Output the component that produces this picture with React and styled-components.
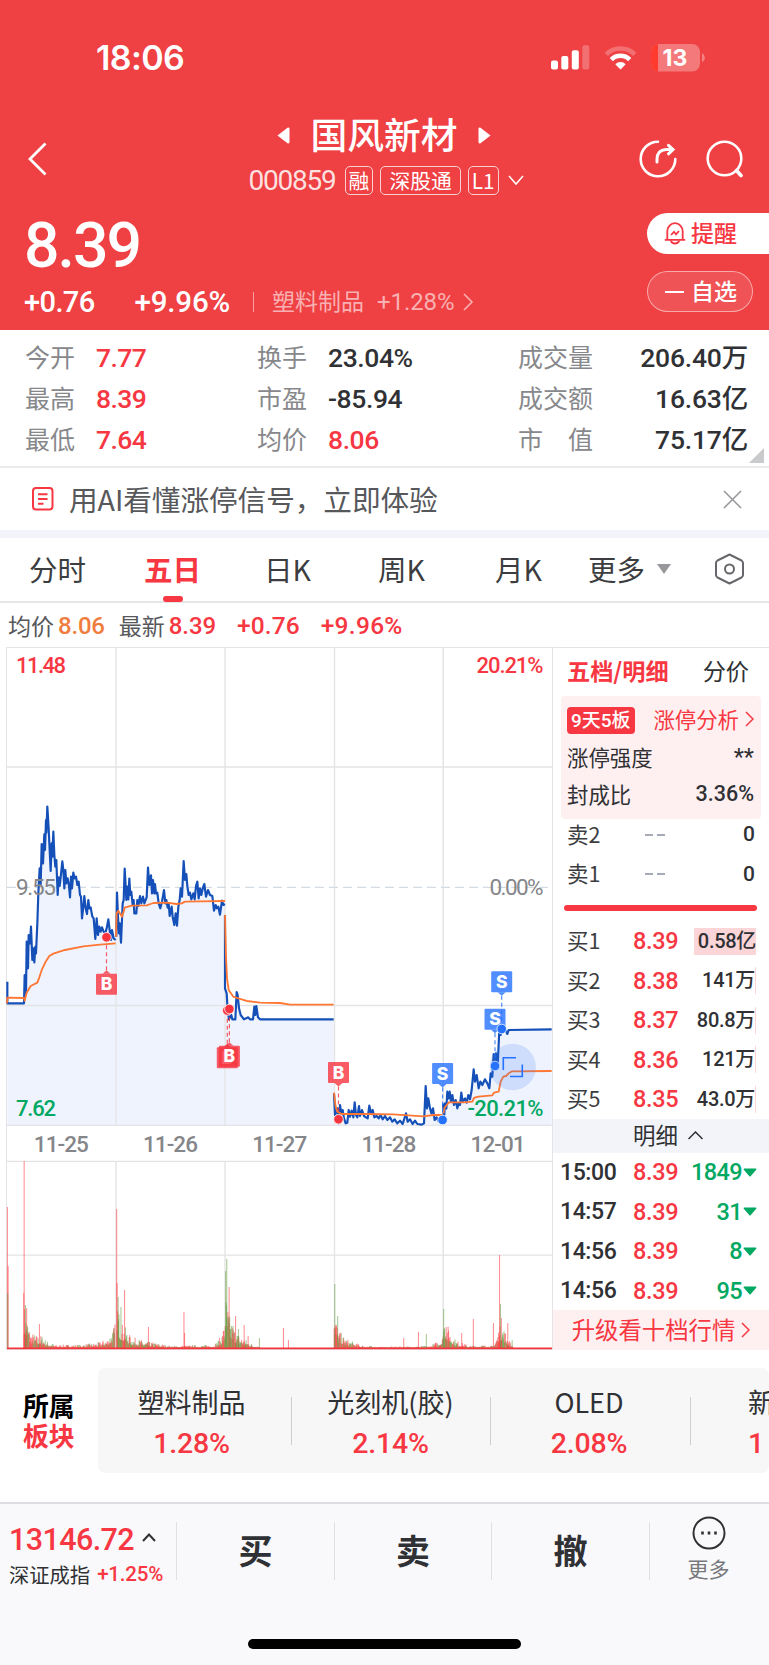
import React from 'react'
import styled, { createGlobalStyle } from 'styled-components'

const RED = '#f73742'
const GREEN = '#00a862'
const DARK = '#303134'
const numFont = 'Roboto, "Noto Sans CJK SC", sans-serif'

const GlobalStyle = createGlobalStyle`
* {
  box-sizing: border-box;
}
body {
  margin: 0;
  background-color: #fff;
  font-family: "Noto Sans CJK SC", sans-serif;
  color: ${DARK};
}
svg {
  display: block;
  flex-shrink: 0;
}
`

const Screen = styled.div`
width: 769px;
height: 1665px;
overflow: hidden;
display: flex;
flex-direction: column;
white-space: nowrap;
`

const Num = styled.span`
font-family: ${numFont};
font-size: ${props => props.$size}px;
font-weight: ${props => props.$weight || 500};
letter-spacing: ${props => props.$ls || 0}px;
color: ${props => props.$color || 'inherit'};
`

/* header */

const TopArea = styled.header`
height: 330px;
background-color: #ef4043;
color: #fff;
`
const StatusBar = styled.div`
height: 115px;
display: flex;
align-items: center;
justify-content: space-between;
padding: 0 63px 0 96px;
`
const Clock = styled.span`
font-family: Inter, sans-serif;
font-size: 34px;
font-weight: 600;
letter-spacing: -0.6px;
`
const StatusIcons = styled.div`
display: flex;
align-items: center;
gap: 14px;
`
const NavBar = styled.div`
height: 90px;
display: grid;
grid-template-columns: 1fr auto 1fr;
padding: 0 26px 0 27px;
align-items: center;
`
const NavIcons = styled.div`
display: flex;
justify-content: flex-end;
gap: 28px;
padding-bottom: 3px;
`
const StockTitle = styled.div`
display: flex;
flex-direction: column;
align-items: center;
`
const NameRow = styled.div`
height: 40px;
display: flex;
align-items: center;
gap: 20px;
padding-right: 2px;
font-size: 36.8px;
font-weight: 500;
line-height: 38px;
`
const Name = styled.span`
padding-bottom: 4px;
`
const CodeRow = styled.div`
height: 50px;
display: flex;
align-items: center;
gap: 7px;
padding: 1px 0 0 2px;
`
const Code = styled(Num)`
color: rgba(255, 255, 255, 0.85);
margin-right: 2px;
`
const Badge = styled.span`
height: 29px;
line-height: 26px;
padding: 0 ${props => props.$pad}px;
border: 1px solid rgba(255, 255, 255, 0.75);
border-radius: 5px;
font-size: 20.8px;
`
const PriceArea = styled.div`
display: flex;
justify-content: space-between;
padding-left: 24px;
`
const Price = styled.div`
height: 80px;
line-height: 81px;
font-family: ${numFont};
font-size: 62.5px;
font-weight: 500;
letter-spacing: -2px;
`
const ChangeRow = styled.div`
height: 34px;
display: flex;
align-items: center;
line-height: 34px;
`
const Percent = styled(Num)`
margin-left: 40px;
`
const Industry = styled.div`
display: flex;
align-items: center;
margin-left: 23px;
color: rgba(255, 255, 255, 0.6);
font-size: 23px;
gap: 13px;
line-height: 30px;
`
const IndustryName = styled.span`
padding-bottom: 4px;
`
const Divider = styled.span`
width: 1px;
height: 20px;
margin-right: 5px;
background-color: rgba(255, 255, 255, 0.5);
`
const Actions = styled.div`
display: flex;
flex-direction: column;
gap: 17px;
padding-top: 8px;
width: 122px;
`
const RemindButton = styled.div`
height: 41px;
line-height: 38px;
display: flex;
align-items: center;
gap: 5px;
padding-left: 17px;
border-radius: 21px 0 0 21px;
background-color: #fff;
color: ${RED};
font-size: 23px;
font-weight: 500;
`
const WatchButton = styled.div`
width: 106px;
height: 41px;
display: flex;
align-items: center;
gap: 7px;
padding-left: 17px;
border: 1px solid rgba(255, 255, 255, 0.5);
border-radius: 21px;
background-color: rgba(255, 255, 255, 0.1);
font-size: 23px;
font-weight: 500;
`
const ActionText = styled.span`
padding-bottom: 3px;
line-height: 34px;
`
const Minus = styled.span`
width: 19px;
height: 2px;
background-color: #fff;
`

/* quote table */

const Stats = styled.section`
height: 138px;
padding: 7px 5px 0 25px;
border-bottom: 2px solid #ebebee;
display: grid;
grid-template-columns: 71px 161px 71px 190px 88px 142px 1fr;
grid-template-rows: repeat(3, 41px);
align-items: center;
line-height: 41px;
`
const StatLabel = styled.span`
font-size: 25px;
color: #87888b;
height: 41px;
line-height: 38px;
`
const StatValue = styled(Num)`
text-align: ${props => props.$right ? 'right' : 'left'};
`
const Corner = styled.svg`
grid-column: 7;
grid-row: 3;
align-self: end;
justify-self: end;
margin-bottom: -3px;
`

const Banner = styled.section`
height: 62px;
display: flex;
align-items: center;
padding: 0 27px 0 32px;
font-size: 28.7px;
color: #57585b;
`
const BannerText = styled.span`
flex: 1;
margin-left: 15px;
padding-bottom: 2px;
letter-spacing: -0.1px;
`
const Band = styled.div`
height: 8px;
background-color: #f2f4f9;
`

/* period tabs */

const Tabs = styled.nav`
height: 65px;
border-bottom: 2px solid #e6e6e8;
display: grid;
grid-template-columns: 115px 120px 114px 117px 93px 118px 1fr;
font-size: 28.5px;
`
const Tab = styled.div`
padding-left: ${props => props.$pad || 0}px;
padding-top: 3px;
line-height: 56px;
display: flex;
align-items: center;
gap: 12px;
height: 59px;
font-weight: ${props => props.$active ? 700 : 400};
color: ${props => props.$active ? RED : '#3c3d40'};
&::after {
  content: '';
  display: ${props => props.$active ? 'block' : 'none'};
  width: 20px;
  height: 6px;
  border-radius: 3px;
  background-color: ${RED};
  position: relative;
  left: -50px;
  top: 30px;
}
`
const InfoRow = styled.div`
height: 44px;
display: flex;
align-items: center;
padding-left: 8px;
font-size: 23px;
color: #57585b;
line-height: 44px;
`
const InfoNum = styled(Num)`
margin-left: ${props => props.$gap}px;
padding-top: 2px;
`
const InfoLabel = styled.span`
margin-left: ${props => props.$gap || 0}px;
`

/* chart and order book */

const Main = styled.main`
display: flex;
height: 703px;
`
const Book = styled.aside`
width: 216px;
border-top: 1px solid #e3e3e6;
display: flex;
flex-direction: column;
`
const BookTabs = styled.div`
height: 48px;
padding: 0 20px 4px 14px;
display: flex;
justify-content: space-between;
align-items: center;
font-size: 23.2px;
`
const BookTab = styled.span`
font-weight: ${props => props.$active ? 700 : 400};
color: ${props => props.$active ? RED : DARK};
`
const LimitPanel = styled.div`
height: 123px;
flex-shrink: 0;
margin: 0 8px -4px;
padding: 6px 7px 0 6px;
border-radius: 4px;
background-color: #fef0f1;
`
const LimitRow = styled.div`
height: 37px;
line-height: 34px;
padding-bottom: ${props => props.$plain ? 2 : 0}px;
display: flex;
justify-content: space-between;
align-items: center;
font-size: 21.4px;
`
const StreakTag = styled.span`
height: 27px;
line-height: 27px;
padding: 0 4px;
border-radius: 4px;
background-color: ${RED};
color: #fff;
font-size: 19px;
font-weight: 500;
font-family: ${numFont};
`
const LimitLink = styled.span`
display: flex;
align-items: center;
gap: 6px;
padding-bottom: 3px;
color: ${RED};
`
const Level = styled.div`
height: 39.4px;
display: grid;
grid-template-columns: 66px 45px 1fr;
align-items: center;
padding: 0 13px 0 14px;
line-height: 36px;
`
const LevelName = styled.span`
font-size: 21.5px;
padding-bottom: 2px;
color: #3c3d40;
`
const NoPrice = styled.span`
justify-self: center;
display: flex;
gap: 4px;
margin-left: -2px;
&::before, &::after {
  content: '';
  width: 8px;
  height: 2px;
  background-color: #a5acb8;
}
`
const Volume = styled(Num)`
justify-self: end;
line-height: 27px;
padding: 0 ${props => props.$plain ? 1 : 0}px 0 4px;
background-color: ${props => props.$fill ? '#fcd5d8' : 'transparent'};
border-right: ${props => props.$edge ? '1px solid #fcd5d8' : 'none'};
`
const Pressure = styled.div`
height: 6px;
flex-shrink: 0;
margin: 11px 12px 11px 11px;
border-radius: 3px;
background-color: ${RED};
`
const DetailHead = styled.div`
height: 34px;
display: flex;
align-items: center;
justify-content: center;
gap: 10px;
padding: 0 5px 0 19px;
background-color: #f2f4f9;
font-size: 22.5px;
line-height: 28px;
`
const DetailTitle = styled.span`
padding-bottom: 3px;
`
const Tick = styled.div`
height: 39.4px;
display: grid;
grid-template-columns: 73px 44px 1fr 15px;
align-items: center;
padding: 0 12px 0 7px;
`
const TickVolume = styled(Num)`
justify-self: end;
`
const TickArrow = styled.svg`
justify-self: end;
`
const Upgrade = styled.div`
flex: 1;
display: flex;
align-items: center;
justify-content: center;
gap: 6px;
background-color: #fef0f1;
color: ${RED};
font-size: 23.4px;
line-height: 34px;
`
const UpgradeText = styled.span`
padding-bottom: 3px;
`

/* sectors */

const Sectors = styled.section`
height: 152px;
display: flex;
padding-top: 18px;
`
const SectorTitle = styled.div`
width: 98px;
padding: 22px 0 0 23px;
height: 105px;
font-size: 25.8px;
font-weight: 700;
line-height: 30px;
color: #000;
`
const SectorTitleRed = styled.div`
color: ${RED};
`
const SectorList = styled.div`
height: 105px;
flex: 1;
display: flex;
align-items: center;
overflow: hidden;
background-color: #f7f7f8;
border-radius: 7px;
`
const Sector = styled.div`
flex: 0 0 ${props => props.$width}px;
height: 48px;
display: flex;
flex-direction: column;
align-items: ${props => props.$cut ? 'flex-start' : 'center'};
justify-content: center;
padding-left: ${props => props.$cut ? 57 : 0}px;
padding-right: ${props => props.$shift || 0}px;
padding-top: 5px;
border-right: 1px solid #cfcfd3;
font-size: 27px;
line-height: 40px;
`
const SectorChange = styled(Num)`
line-height: 43px;
`

/* bottom bar */

const BottomBar = styled.footer`
flex: 1;
border-top: 2px solid #dcdde1;
background-color: #f9f9fc;
display: flex;
flex-direction: column;
align-items: center;
justify-content: space-between;
padding: 18px 0 16px;
`
const Trade = styled.div`
width: 769px;
display: grid;
grid-template-columns: 176px 158px 157px 158px 1fr;
grid-template-rows: 58px;
height: 58px;
`
const TradeButton = styled.div`
display: flex;
align-items: center;
justify-content: center;
padding: 0 0 2px;
border-left: 1px solid #dfe0e4;
font-size: 34px;
line-height: 50px;
font-weight: 600;
`
const IndexBox = styled.div`
padding: 9px 0 0 9px;
display: flex;
flex-direction: column;
justify-content: center;
`
const IndexRow = styled.div`
display: flex;
align-items: center;
gap: ${props => props.$gap}px;
font-size: 20.3px;
line-height: ${props => props.$lh}px;
`
const MoreBox = styled.div`
border-left: 1px solid #dfe0e4;
padding: 0 2px 2px 0;
display: flex;
flex-direction: column;
align-items: center;
justify-content: center;
gap: 2px;
font-size: 21px;
line-height: 32px;
color: #77787b;
`
const HomeIndicator = styled.div`
width: 273px;
height: 10px;
border-radius: 5px;
background-color: #000;
`

const stats = [
    ['今开', '7.77', true, '换手', '23.04%', false, '成交量', '206.40万'],
    ['最高', '8.39', true, '市盈', '-85.94', false, '成交额', '16.63亿'],
    ['最低', '7.64', true, '均价', '8.06', true, '市　值', '75.17亿']
]

const bids = [
    ['买1', '8.39', '0.58亿'],
    ['买2', '8.38', '141万'],
    ['买3', '8.37', '80.8万'],
    ['买4', '8.36', '121万'],
    ['买5', '8.35', '43.0万']
]

const ticks = [
    ['15:00', '1849'],
    ['14:57', '31'],
    ['14:56', '8'],
    ['14:56', '95']
]

// Each session holds its points at three times the chart size, from its own origin
const sessions = [
    {
        origin: '0 640',
        area: [22, 347, 1455],
        price: '22,1025 22,1090 72,1090 74,1005 78,1060 80,905 84,985 86,885 90,910 93,860 97,960 100,925 103,967 106,920 108,940 112,850 115,760 119,685 122,735 125,612 129,670 133,583 135,630 138,540 139,578 142,500 146,565 149,630 152,693 155,610 157,650 160,575 163,645 166,680 169,660 173,765 176,712 179,738 182,712 187,664 190,690 193,745 196,690 199,730 203,715 207,738 210,772 213,710 216,745 220,698 224,715 228,710 232,735 236,725 240,765 243,770 246,835 250,800 253,768 257,805 261,822 265,780 268,805 272,802 277,830 281,835 286,897 290,835 294,885 298,860 302,875 306,862 311,875 316,880 320,865 325,838 329,870 333,900 336,870 341,895 347,900',
        avg: '21,1090 22,1073 72,1074 74,1082 80,1058 92,1038 112,1028 118,1012 126,988 137,965 148,948 160,941 195,930 250,919 300,914 347,910'
    },
    {
        origin: '0 640',
        area: [349, 675, 1455],
        price: '349,890 351,758 354,830 357,880 359,850 363,908 368,790 371,780 374,686 377,738 379,780 382,740 385,778 388,716 391,765 394,755 398,795 401,780 403,820 409,820 412,780 415,798 420,768 424,790 429,770 433,790 440,772 444,683 448,735 453,706 456,760 459,720 463,760 465,732 468,760 472,758 476,790 481,805 486,785 492,750 496,790 499,780 503,803 506,790 509,828 515,800 518,830 523,855 527,820 531,857 535,800 539,780 542,745 546,770 551,663 555,720 559,702 562,738 566,765 570,758 574,778 580,760 584,778 588,738 592,725 596,775 600,745 604,765 609,742 613,732 618,770 624,750 630,765 637,768 642,812 647,795 651,805 655,800 660,824 666,782 670,795 675,793',
        avg: '348,890 350,820 355,812 366,830 371,815 374,803 395,797 440,796 460,789 500,788 530,792 545,790 555,785 600,784 675,783'
    },
    {
        origin: '0 640',
        area: [675, 1001, 1455],
        price: '675,825 675,1045 680,1060 683,1110 687,1138 694,1125 697,1138 706,1138 710,1056 713,1065 717,1105 722,1125 732,1138 745,1132 750,1138 759,1138 763,1100 766,1125 769,1098 774,1132 780,1138 1001,1138',
        avg: '675,825 678,950 681,1015 686,1050 700,1070 715,1075 740,1083 780,1088 840,1089 870,1094 1001,1094'
    },
    {
        origin: '220 780',
        area: [342, 668, 1035],
        price: '342,940 345,1005 352,985 356,1030 360,975 364,1000 368,990 372,1015 377,1030 382,1028 386,990 390,1010 395,992 400,1012 404,967 408,1005 412,1012 417,978 420,1008 426,990 432,1008 438,1012 443,1015 448,977 453,1000 458,990 463,1012 470,1008 476,1015 482,1005 488,1018 495,1008 502,1020 510,1012 517,1025 524,1018 532,1030 540,1022 548,1032 558,1000 563,1025 570,1018 578,1032 585,1022 592,1032 605,1034 612,1030 617,918 621,985 625,955 630,985 634,1000 639,985 644,1020 650,1012 656,1025 662,1008 668,1020',
        avg: '342,938 347,980 352,995 365,1002 430,1002 520,1003 610,1009 640,1005 668,1005'
    },
    {
        origin: '220 780',
        area: [669, 995, 1035],
        price: '669,970 672,1015 675,970 679,985 682,935 686,955 689,935 693,965 697,945 702,975 707,960 712,985 716,970 720,975 724,938 728,965 735,955 740,968 745,945 750,958 755,930 761,868 765,905 770,885 776,925 781,905 787,915 795,898 802,910 808,925 812,880 817,890 821,822 825,855 828,820 833,858 838,750 842,765 846,750 858,752 862,762 866,750 995,748',
        avg: '670,1000 673,985 680,975 687,967 730,967 757,965 762,954 775,950 817,946 822,938 836,935 842,905 850,890 858,888 866,880 876,874 995,873'
    }
]

const days = ['11-25', '11-26', '11-27', '11-28', '12-01']
const dayLines = [116, 225, 334.5, 443.2]

// [x, height] envelope of the small volume bars, per session
const volumeShape = [
    [[24, 42], [27, 30], [30, 16], [38, 12], [42, 13], [46, 8], [55, 4], [80, 4], [98, 6], [108, 10], [115, 24]],
    [[117, 52], [120, 26], [124, 22], [130, 12], [146, 7], [155, 6], [170, 3], [214, 4], [221, 12], [225, 26]],
    [[225, 55], [230, 28], [236, 16], [245, 9], [252, 5], [260, 2]],
    [[334, 42], [338, 18], [345, 10], [360, 4], [380, 2], [430, 3], [440, 9], [443, 12]],
    [[443, 36], [449, 18], [456, 8], [470, 3], [480, 4], [493, 3], [499, 20], [502, 24], [508, 10], [513, 2]]
]

// [x, height, rising]
const spikes = [
    [7.3, 142, 1], [8, 83, 1], [7.6, 56, 0], [24, 188, 1], [23.6, 56, 1], [25.3, 44, 0], [26.5, 41, 1],
    [39.3, 25, 1], [116.5, 140, 1], [117, 66, 1], [118, 52, 0], [120.8, 42, 0], [124.4, 59, 1],
    [148.3, 22, 1], [183.8, 37, 1], [184.4, 16, 1], [225.5, 78, 0], [226.6, 90, 0], [229, 62, 1],
    [235.4, 33, 1], [232.9, 23, 0], [238.3, 20, 0], [244, 24, 1], [248, 13, 1], [259.3, 11, 0],
    [283.3, 21, 1], [288.3, 9, 1], [334.6, 65, 0], [337.5, 33, 0], [418.3, 17, 1], [426.2, 15, 0],
    [403.6, 11, 1], [443.5, 40, 0], [446, 22, 1], [461.5, 16, 1], [473.2, 30, 1], [493.3, 26, 1],
    [499.4, 94, 1], [500.3, 45, 0], [501.2, 31, 1], [507.6, 26, 1], [512, 9, 0]
]

function smallBars() {
    const bars = []
    let seed = 7
    volumeShape.forEach(shape => {
        for (let i = 0; i < shape.length - 1; i++) {
            const [x0, h0] = shape[i]
            const [x1, h1] = shape[i + 1]
            for (let x = x0; x < x1; x += 0.45) {
                seed = (seed * 16807) % 2147483647
                const random = seed / 2147483647
                const top = h0 + (h1 - h0) * (x - x0) / (x1 - x0)
                bars.push([x, Math.max(1.5, top * (0.35 + 0.75 * random * random)), seed % 9 < 5 ? 1 : 0])
            }
        }
    })
    return bars
}

const marks = [
    { type: 'B', x: 227.3, y: 1047.3, dot: 1010.5 },
    { type: 'B', x: 106.5, y: 973.7, dot: 937.3 },
    { type: 'B', x: 229.4, y: 1045.7, dot: 1009 },
    { type: 'B', x: 338.5, y: 1062, dot: 1119.3 },
    { type: 'S', x: 442.6, y: 1063, dot: 1120 },
    { type: 'S', x: 495, y: 1008.7, dot: 1066 },
    { type: 'S', x: 501.7, y: 971.3, dot: 1029 }
]

function Mark({ type, x, y, dot }) {
    const up = dot < y
    const main = type === 'B' ? '#f7333f' : '#2472ff'
    const edge = up ? y : y + 21
    const tip = up ? y - 3.5 : y + 24.5
    return (
        <g>
            <line x1={x} x2={x} y1={tip} y2={dot} stroke={main} strokeOpacity=".8" strokeWidth="1.2" strokeDasharray="4 3" />
            <g fill={main} fillOpacity=".8">
                <rect x={x - 10.5} y={y} width="21" height="21" rx="1" />
                <path d={`M${x - 4} ${edge} L${x} ${tip} L${x + 4} ${edge}Z`} />
            </g>
            <text x={x} y={y + 16.6} textAnchor="middle" fill="#fff" fontSize="17.5" fontWeight="800" fontFamily="Inter">{type}</text>
            <circle cx={x} cy={dot} r="4.8" fill={main} stroke="#fff" strokeWidth=".8" />
        </g>
    )
}

function Chart() {
    return (
        <svg width="553" height="703" viewBox="0 647 553 703" fontFamily="Roboto" fontWeight="500">
            {sessions.map(({ origin, area, price }, i) => (
                <polygon
                    key={i}
                    transform={`translate(${origin}) scale(0.33333)`}
                    points={`${area[0]},${area[2]} ${price} ${area[1]},${area[2]}`}
                    fill="#eef3fe"
                />
            ))}
            <g stroke="#e4e4e6" fill="none">
                <rect x="6.5" y="647.5" width="546" height="702" />
                {dayLines.map(x => <path key={x} d={`M${x} 648V1125M${x} 1161V1349`} strokeWidth="1.4" />)}
                <path d="M7 767H552M7 1005.5H552M7 1125.3H552M7 1161.3H552M7 1255.2H552" strokeWidth="1.3" />
                <path d="M7 887.3H552" stroke="#d3dbe4" strokeWidth="1.3" strokeDasharray="9 5" />
            </g>
            <g fontSize="22.5" fontWeight="400" fill="#858689">
                <text x="543.5" y="894.5" textAnchor="end" textLength="54">0.00%</text>
            </g>
            {sessions.map(({ origin, price, avg }, i) => (
                <g key={i} transform={`translate(${origin}) scale(0.33333)`} fill="none" strokeLinejoin="round">
                    <polyline points={price} stroke="#1450b8" strokeWidth="6.5" />
                    <polyline points={avg} stroke="#ff7733" strokeWidth="5.5" />
                </g>
            ))}
            <text x="16" y="894.5" fontSize="22.5" fontWeight="400" fill="#858689" textLength="40">9.55</text>
            <g fontSize="22">
                <text x="16" y="672.5" fill={RED} textLength="50">11.48</text>
                <text x="543.5" y="672.5" fill={RED} textAnchor="end" textLength="67">20.21%</text>
                <text x="16" y="1116" fill={GREEN} textLength="40">7.62</text>
                <text x="543.5" y="1116" fill={GREEN} textAnchor="end" textLength="76">-20.21%</text>
            </g>
            {marks.map((mark, i) => <Mark key={i} {...mark} />)}
            <circle cx="512.7" cy="1067" r="23.2" fill="#3f7cf0" fillOpacity=".18" />
            <path d="M516 1057.8H503.3V1070M522.3 1064.5V1076.5H510" fill="none" stroke="#2472ff" strokeWidth="1.6" />
            {days.map((day, i) => (
                <text key={day} x={61.3 + i * 109.2} y="1152" textAnchor="middle" fontSize="22.5" fill="#858689" textLength="55">{day}</text>
            ))}
            {smallBars().concat(spikes).map(([x, h, rising], i) => (
                <rect key={i} x={x - 0.4} y={1349 - h} width="1.1" height={h} fill={rising ? '#ff2f38' : '#5f9a3a'} fillOpacity=".52" />
            ))}
            <path d="M7 1348.3H552" stroke="#f5333d" strokeWidth="1.7" />
        </svg>
    )
}

function Header() {
    return (
        <TopArea>
            <StatusBar>
                <Clock>18:06</Clock>
                <StatusIcons>
                    <svg width="39" height="25" viewBox="0 0 39 25" fill="#fff">
                        <rect x="0" y="15.5" width="7" height="9" rx="2" />
                        <rect x="10.3" y="11" width="7" height="13.5" rx="2" />
                        <rect x="20.8" y="5.3" width="7" height="19.2" rx="2" />
                        <rect x="31.3" y=".3" width="7" height="24.2" rx="2" fillOpacity=".25" />
                    </svg>
                    <svg width="33" height="25" viewBox="0 0 33 25" fill="none">
                        <path d="M2.2 9.3A20.5 20.5 0 0 1 30.8 9.3" stroke="#fff" strokeOpacity=".25" strokeWidth="4.6" />
                        <path d="M7.3 14.6A13 13 0 0 1 25.7 14.6" stroke="#fff" strokeWidth="4.6" />
                        <path d="M11.3 19.2A7.5 7.5 0 0 1 21.7 19.2L16.5 24.6Z" fill="#fff" />
                    </svg>
                    <svg width="55" height="28" viewBox="0 0 55 28">
                        <clipPath id="battery"><rect width="49" height="27.5" rx="8" /></clipPath>
                        <g clipPath="url(#battery)">
                            <rect width="49" height="28" fill="#fff" fillOpacity=".3" />
                            <rect width="7" height="28" fill="#ff3b30" />
                        </g>
                        <path d="M51 9Q54 11 54 13.7T51 18.5Z" fill="#fff" fillOpacity=".35" />
                        <text x="24" y="21.5" textAnchor="middle" fontSize="23" fontWeight="700" fontFamily="Inter" fill="#fff">13</text>
                    </svg>
                </StatusIcons>
            </StatusBar>
            <NavBar>
                <svg width="22" height="36" viewBox="0 0 22 36" fill="none" stroke="#fff" strokeWidth="2.8">
                    <path d="M18.5 1.5L3 17L18.5 32.5" />
                </svg>
                <StockTitle>
                    <NameRow>
                        <svg width="13" height="17" viewBox="0 0 13 17" fill="#fff"><path d="M0.5 8.5L10.5 .7Q12.5 0 12.5 2V15Q12.5 17 10.5 16.3Z" /></svg>
                        <Name>国风新材</Name>
                        <svg width="13" height="17" viewBox="0 0 13 17" fill="#fff"><path d="M12.5 8.5L2.5 .7Q.5 0 .5 2V15Q.5 17 2.5 16.3Z" /></svg>
                    </NameRow>
                    <CodeRow>
                        <Code $size={28} $ls={-1.2} $weight={400}>000859</Code>
                        <Badge $pad={3}>融</Badge>
                        <Badge $pad={8}>深股通</Badge>
                        <Badge $pad={3}>L1</Badge>
                        <svg width="18" height="12" viewBox="-4 0 18 12" fill="none" stroke="#fff" strokeWidth="1.5"><path d="M-1 1L6 9L13 1" /></svg>
                    </CodeRow>
                </StockTitle>
                <NavIcons>
                    <svg width="38" height="38" viewBox="0 0 38 38" fill="none" stroke="#fff" strokeWidth="2.6" strokeLinecap="round">
                        <path d="M19 1.7A17.3 17.3 0 1 0 36.3 19" />
                        <path d="M18 22V19.5Q18 10 27 9.5H33.5M29.5 5.3L34 9.5L29.5 13.8" strokeWidth="3" />
                    </svg>
                    <svg width="38" height="38" viewBox="0 0 38 38" fill="none" stroke="#fff" strokeWidth="2.6">
                        <circle cx="19.5" cy="18.5" r="16.8" />
                        <path d="M31.5 30.5L36 35.5" strokeWidth="3.6" strokeLinecap="round" />
                    </svg>
                </NavIcons>
            </NavBar>
            <PriceArea>
                <div>
                    <Price>8.39</Price>
                    <ChangeRow>
                        <Num $size={29} $ls={-0.6}>+0.76</Num>
                        <Percent $size={29.5} $ls={-0.2}>+9.96%</Percent>
                        <Industry>
                            <Divider />
                            <IndustryName>塑料制品</IndustryName>
                            <Num $size={24} $ls={-0.1} $weight={400}>+1.28%</Num>
                            <svg width="10" height="18" viewBox="6 0 10 18" overflow="visible" fill="none" stroke="#fff" strokeOpacity=".6" strokeWidth="1.6"><path d="M3 1L11 9L3 17" /></svg>
                        </Industry>
                    </ChangeRow>
                </div>
                <Actions>
                    <RemindButton>
                        <svg width="22" height="23" viewBox="0 0 22 23" fill="none" stroke={RED} strokeWidth="1.8">
                            <path d="M.8 17.8H21.2M3.3 17.5V9.5A7.7 8.3 0 0 1 18.7 9.5V17.5" />
                            <path d="M6.8 18.5Q7.5 21.5 11 21.5T15.2 18.5" />
                            <path d="M7 13L10 9.8L12 12.3L15 9" />
                        </svg>
                        <ActionText>提醒</ActionText>
                    </RemindButton>
                    <WatchButton><Minus /><ActionText>自选</ActionText></WatchButton>
                </Actions>
            </PriceArea>
        </TopArea>
    )
}

function OrderBook() {
    return (
        <Book>
            <BookTabs><BookTab $active>五档/明细</BookTab><BookTab>分价</BookTab></BookTabs>
            <LimitPanel>
                <LimitRow>
                    <StreakTag>9天5板</StreakTag>
                    <LimitLink>
                        涨停分析
                        <svg width="9" height="16" viewBox="0 0 9 16" fill="none" stroke={RED} strokeWidth="1.5"><path d="M1 1L8 8L1 15" /></svg>
                    </LimitLink>
                </LimitRow>
                <LimitRow $plain>涨停强度<Num $size={23.5} $weight={400}>**</Num></LimitRow>
                <LimitRow $plain>封成比<Num $size={21.5}>3.36%</Num></LimitRow>
            </LimitPanel>
            {['卖2', '卖1'].map(name => (
                <Level key={name}>
                    <LevelName>{name}</LevelName>
                    <NoPrice />
                    <Volume $size={21} $plain>0</Volume>
                </Level>
            ))}
            <Pressure />
            {bids.map(([name, price, volume], i) => (
                <Level key={name}>
                    <LevelName>{name}</LevelName>
                    <Num $size={23.5} $ls={-0.3} $color={RED}>{price}</Num>
                    <Volume $size={20} $ls={-0.3} $fill={i === 0} $edge={i > 0}>{volume}</Volume>
                </Level>
            ))}
            <DetailHead>
                <DetailTitle>明细</DetailTitle>
                <svg width="15" height="9" viewBox="0 0 15 9" fill="none" stroke={DARK} strokeWidth="1.5"><path d="M.5 8L7.5 1L14.5 8" /></svg>
            </DetailHead>
            {ticks.map(([time, volume], i) => (
                <Tick key={i}>
                    <Num $size={23} $ls={-0.4}>{time}</Num>
                    <Num $size={23.5} $ls={-0.3} $color={RED}>8.39</Num>
                    <TickVolume $size={23.5} $ls={-0.6} $color={GREEN}>{volume}</TickVolume>
                    <TickArrow width="14" height="9" viewBox="0 0 14 9" fill={GREEN}><path d="M1 .5H13Q14 1 13 2L7.8 8Q7 9 6.2 8L1 2Q0 1 1 .5Z" /></TickArrow>
                </Tick>
            ))}
            <Upgrade>
                <UpgradeText>升级看十档行情</UpgradeText>
                <svg width="9" height="16" viewBox="0 0 9 16" fill="none" stroke={RED} strokeWidth="1.5"><path d="M1 1L8 8L1 15" /></svg>
            </Upgrade>
        </Book>
    )
}

export default function App() {
    return (
        <Screen>
            <GlobalStyle />
            <Header />
            <Stats>
                {stats.map(row => (
                    <React.Fragment key={row[0]}>
                        <StatLabel>{row[0]}</StatLabel>
                        <StatValue $size={26.5} $ls={-0.6} $color={row[2] && RED}>{row[1]}</StatValue>
                        <StatLabel>{row[3]}</StatLabel>
                        <StatValue $size={26.5} $ls={-0.4} $color={row[5] && RED}>{row[4]}</StatValue>
                        <StatLabel>{row[6]}</StatLabel>
                        <StatValue $size={26.5} $ls={-0.2} $right>{row[7]}</StatValue>
                        {row[0] === '最低' ? <Corner width="15" height="15" viewBox="0 0 15 15" fill="#c9cacc"><path d="M15 0V15H0Z" /></Corner> : <span />}
                    </React.Fragment>
                ))}
            </Stats>
            <Banner>
                <svg width="22" height="24" viewBox="0 0 22 24" fill="none" stroke={RED} strokeWidth="2">
                    <rect x="1" y="1" width="19.5" height="21.5" rx="3" />
                    <path d="M6 7.3H15.5M6 12H15.5M6 16.7H11.5" />
                </svg>
                <BannerText>用AI看懂涨停信号，立即体验</BannerText>
                <svg width="19" height="19" viewBox="0 0 19 19" stroke="#97989b" strokeWidth="1.6"><path d="M1 1L18 18M18 1L1 18" /></svg>
            </Banner>
            <Band />
            <Tabs>
                <Tab $pad={29}>分时</Tab>
                <Tab $pad={29} $active>五日</Tab>
                <Tab $pad={29}>日K</Tab>
                <Tab $pad={29}>周K</Tab>
                <Tab $pad={29}>月K</Tab>
                <Tab $pad={29}>
                    更多
                    <svg width="14" height="10" viewBox="0 0 14 10" fill="#97989b"><path d="M0 0H14L7 10Z" /></svg>
                </Tab>
                <Tab $pad={38}>
                    <svg width="29" height="32" viewBox="0 0 29 32" fill="none" stroke="#66676a" strokeWidth="2">
                        <path d="M14.5 1.5L26.5 7.5Q28 8.5 28 10V22Q28 23.5 26.5 24.5L14.5 30.5L2.5 24.5Q1 23.5 1 22V10Q1 8.5 2.5 7.5Z" strokeLinejoin="round" />
                        <circle cx="14.5" cy="16" r="4.5" />
                    </svg>
                </Tab>
            </Tabs>
            <InfoRow>
                <InfoLabel>均价</InfoLabel>
                <InfoNum $size={24} $ls={-0.2} $gap={4} $color="#f07c3e">8.06</InfoNum>
                <InfoLabel $gap={14}>最新</InfoLabel>
                <InfoNum $size={24} $ls={-0.1} $gap={4} $color={RED}>8.39</InfoNum>
                <InfoNum $size={24.5} $ls={0.1} $gap={21} $color={RED}>+0.76</InfoNum>
                <InfoNum $size={24.5} $ls={0.3} $gap={21} $color={RED}>+9.96%</InfoNum>
            </InfoRow>
            <Main>
                <Chart />
                <OrderBook />
            </Main>
            <Sectors>
                <SectorTitle>所属<SectorTitleRed>板块</SectorTitleRed></SectorTitle>
                <SectorList>
                    <Sector $width={194} $shift={6}>塑料制品<SectorChange $size={28.5} $ls={-0.2} $color={RED}>1.28%</SectorChange></Sector>
                    <Sector $width={199} $shift={1}>光刻机(胶)<SectorChange $size={28.5} $ls={-0.2} $color={RED}>2.14%</SectorChange></Sector>
                    <Sector $width={200} $shift={3}>OLED<SectorChange $size={28.5} $ls={-0.2} $color={RED}>2.08%</SectorChange></Sector>
                    <Sector $width={200} $cut>新<SectorChange $size={28.5} $color={RED}>1</SectorChange></Sector>
                </SectorList>
            </Sectors>
            <BottomBar>
                <Trade>
                    <IndexBox>
                        <IndexRow $lh={36} $gap={8}>
                            <Num $size={30.5} $ls={-0.6} $color={RED}>13146.72</Num>
                            <svg width="14" height="13" viewBox="0 0 14 13" fill="none" stroke={DARK} strokeWidth="2"><path d="M1 8L7 1.5L13 8" /></svg>
                        </IndexRow>
                        <IndexRow $lh={32} $gap={7}>
                            深证成指
                            <Num $size={20.5} $ls={-0.2} $color={RED}>+1.25%</Num>
                        </IndexRow>
                    </IndexBox>
                    <TradeButton>买</TradeButton>
                    <TradeButton>卖</TradeButton>
                    <TradeButton>撤</TradeButton>
                    <MoreBox>
                        <svg width="34" height="34" viewBox="0 0 34 34" fill="none" stroke={DARK} strokeWidth="2">
                            <circle cx="17" cy="17" r="15.5" />
                            <path d="M9.2 17H11.8M15.7 17H18.3M22.2 17H24.8" strokeWidth="2.8" />
                        </svg>
                        更多
                    </MoreBox>
                </Trade>
                <HomeIndicator />
            </BottomBar>
        </Screen>
    )
}
